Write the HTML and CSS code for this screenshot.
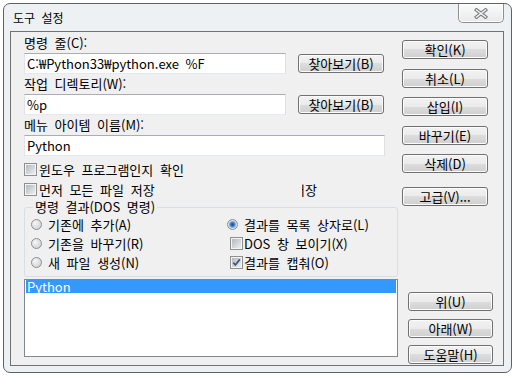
FILE: index.html
```html
<!DOCTYPE html>
<html lang="ko">
<head>
    <meta charset="UTF-8">
    <title>도구 설정</title>
    <link rel="stylesheet" href="styles.css">
</head>
<body>
    <div class="window">
        <div class="titlebar">
            <span class="title">도구 설정</span>
            <button class="close-btn" title="닫기">
                <svg width="14" height="11" viewBox="0 0 14 11">
                    <path d="M2.5 2 L11.5 9 M11.5 2 L2.5 9" stroke="#7d7f82" stroke-width="3.6" stroke-linecap="square"/>
                    <path d="M2.5 2 L11.5 9 M11.5 2 L2.5 9" stroke="#f7f7f7" stroke-width="1.4" stroke-linecap="square"/>
                </svg>
            </button>
        </div>

        <div class="client">
            <div class="top-section">
                <div class="form">
                    <div class="field-label">명령 줄(C):</div>
                    <div class="field-row">
                        <input type="text" class="textbox" value="C:₩Python33₩python.exe %F">
                        <button class="btn">찾아보기(B)</button>
                    </div>

                    <div class="field-label">작업 디렉토리(W):</div>
                    <div class="field-row">
                        <input type="text" class="textbox" value="%p">
                        <button class="btn">찾아보기(B)</button>
                    </div>

                    <div class="field-label">메뉴 아이템 이름(M):</div>
                    <div class="field-row">
                        <input type="text" class="textbox wide" value="Python">
                    </div>

                    <div class="check-row first">
                        <span class="checkbox"></span>윈도우 프로그램인지 확인
                    </div>
                    <div class="check-row">
                        <span class="checkbox"></span>먼저 모든 파일 저장
                        <span class="ghost"><span>저장</span></span>
                    </div>

                    <fieldset class="group">
                        <legend>명령 결과(DOS 명령)</legend>
                        <div class="options">
                            <div class="option"><span class="radio"></span>기존에 추가(A)</div>
                            <div class="option"><span class="radio checked"></span>결과를 목록 상자로(L)</div>
                            <div class="option"><span class="radio"></span>기존을 바꾸기(R)</div>
                            <div class="option check"><span class="checkbox"></span>DOS 창 보이기(X)</div>
                            <div class="option"><span class="radio"></span>새 파일 생성(N)</div>
                            <div class="option check">
                                <span class="checkbox">
                                    <svg width="9" height="9" viewBox="0 0 9 9">
                                        <path d="M1.3 4.6 L3.4 7 L7.8 1.4" fill="none" stroke="#3f5483" stroke-width="1.7"/>
                                    </svg>
                                </span>결과를 캡춰(O)
                            </div>
                        </div>
                    </fieldset>
                </div>

                <div class="side-buttons">
                    <button class="btn">확인(K)</button>
                    <button class="btn">취소(L)</button>
                    <button class="btn">삽입(I)</button>
                    <button class="btn">바꾸기(E)</button>
                    <button class="btn">삭제(D)</button>
                    <button class="btn spaced">고급(V)...</button>
                </div>
            </div>

            <div class="bottom-section">
                <div class="listbox">
                    <div class="list-item selected">Python</div>
                </div>
                <div class="lower-buttons">
                    <button class="btn">위(U)</button>
                    <button class="btn">아래(W)</button>
                    <button class="btn">도움말(H)</button>
                </div>
            </div>
        </div>
    </div>
</body>
</html>
```

FILE: styles.css
```css
body {
    margin: 0;
    background-color: #ffffff;
    font-family: "Noto Sans CJK KR", sans-serif;
    font-size: 13px;
    color: #000;
    word-spacing: 3px;
}
.window {
    width: 509px;
    height: 370px;
    margin: 3px 0 0 3px;
    box-sizing: border-box;
    border: 1px solid #5f6265;
    border-radius: 7px;
    background-color: #eef1f4;
    display: flex;
    flex-direction: column;
}
.titlebar {
    height: 27px;
    display: flex;
    justify-content: space-between;
    align-items: flex-start;
}
.title {
    margin: 7px 0 0 9px;
    font-size: 12px;
    line-height: 14px;
}
.close-btn {
    width: 46px;
    height: 19px;
    margin-right: 7px;
    padding: 0;
    border: 1px solid #8c8e91;
    border-top: none;
    border-radius: 0 0 5px 5px;
    background: linear-gradient(#fbfbfb, #e8e9ea);
    box-shadow: inset 0 0 0 1px #ffffff;
    display: flex;
    align-items: center;
    justify-content: center;
}
.client {
    width: 494px;
    height: 335px;
    margin-left: 6px;
    box-sizing: border-box;
    border: 1px solid #6f7275;
    background-color: #f0f0f0;
    padding: 1px 0 0 13px;
}

/* top part: fields on the left, command buttons on the right */
.top-section {
    display: flex;
    gap: 4px;
}
.form {
    width: 374px;
    display: flex;
    flex-direction: column;
}
.field-label {
    height: 18px;
    line-height: 18px;
    margin-top: 1px;
}
.field-row {
    display: flex;
    align-items: center;
    gap: 12px;
    margin-top: 1px;
}
.textbox {
    width: 262px;
    height: 21px;
    box-sizing: border-box;
    margin: 0;
    padding: 0 0 0 2px;
    border: 1px solid;
    border-color: #abadb3 #dbdfe6 #e3e9ef #e2e3ea;
    background-color: #fff;
    font: inherit;
    word-spacing: inherit;
    color: #000;
    outline: none;
}
.textbox.wide {
    width: 361px;
}
.btn {
    width: 86px;
    height: 19px;
    box-sizing: border-box;
    margin: 0;
    padding: 0;
    border: 1px solid #707070;
    border-radius: 3px;
    background: linear-gradient(#f2f2f2 0%, #ebebeb 50%, #dddddd 50%, #cfcfcf 100%);
    box-shadow: inset 0 0 0 1px #fcfcfc;
    font-family: inherit;
    font-size: 13px;
    line-height: 15px;
    word-spacing: inherit;
    color: #000;
}
.check-row {
    height: 20px;
    display: flex;
    align-items: center;
    gap: 2px;
}
.check-row.first {
    margin-top: 3px;
}
.checkbox {
    width: 13px;
    height: 13px;
    box-sizing: border-box;
    flex: none;
    padding: 1px;
    border: 1px solid #8e8f8f;
    background: linear-gradient(135deg, #b3b8be, #eeeeee) content-box, #f4f4f4;
    display: flex;
}
.ghost {
    display: inline-block;
    width: 20px;
    margin-left: auto;
    margin-right: 76px;
    overflow: hidden;
    white-space: nowrap;
}
.ghost span {
    margin-left: -9px;
}

/* 명령 결과 group box */
.group {
    width: 374px;
    min-width: 0;
    box-sizing: border-box;
    margin: 0;
    padding: 0 4px 4px 6px;
    border: 1px solid #d5dfe5;
    border-radius: 3px;
}
.group legend {
    margin-left: 2px;
    padding: 0 2px;
    line-height: 16px;
}
.options {
    display: grid;
    grid-template-columns: 196px 1fr;
    grid-auto-rows: 19px;
}
.option {
    display: flex;
    align-items: center;
    gap: 6px;
}
.option.check {
    gap: 1px;
}
.option.check .checkbox {
    margin-left: 3px;
}
.radio {
    width: 11px;
    height: 11px;
    box-sizing: border-box;
    flex: none;
    border: 1px solid #8e8f8f;
    border-radius: 50%;
    background: radial-gradient(circle at 35% 35%, #f6f6f6, #c6cacf);
}
.radio.checked {
    background: radial-gradient(circle, #1d4f8c 0, #2f72b8 1.6px, #72b0e4 3px, #dce6ef 4px, #c6cacf 5px);
}
.side-buttons {
    display: flex;
    flex-direction: column;
    gap: 9.5px;
    margin-top: 7px;
}
.btn.spaced {
    margin-top: 4.5px;
}

/* bottom part: tool list and ordering buttons */
.bottom-section {
    display: flex;
    margin-top: 2px;
}
.listbox {
    width: 374px;
    height: 78px;
    box-sizing: border-box;
    padding: 0 1px;
    border: 1px solid #828790;
    background-color: #fff;
}
.list-item {
    height: 13px;
    line-height: 13px;
    padding-left: 1px;
}
.list-item.selected {
    background-color: #3399ff;
    color: #fff;
}
.lower-buttons {
    display: flex;
    flex-direction: column;
    gap: 7.5px;
    margin-left: 10px;
    padding-top: 13px;
}
.lower-buttons .btn {
    width: 85px;
}
```
